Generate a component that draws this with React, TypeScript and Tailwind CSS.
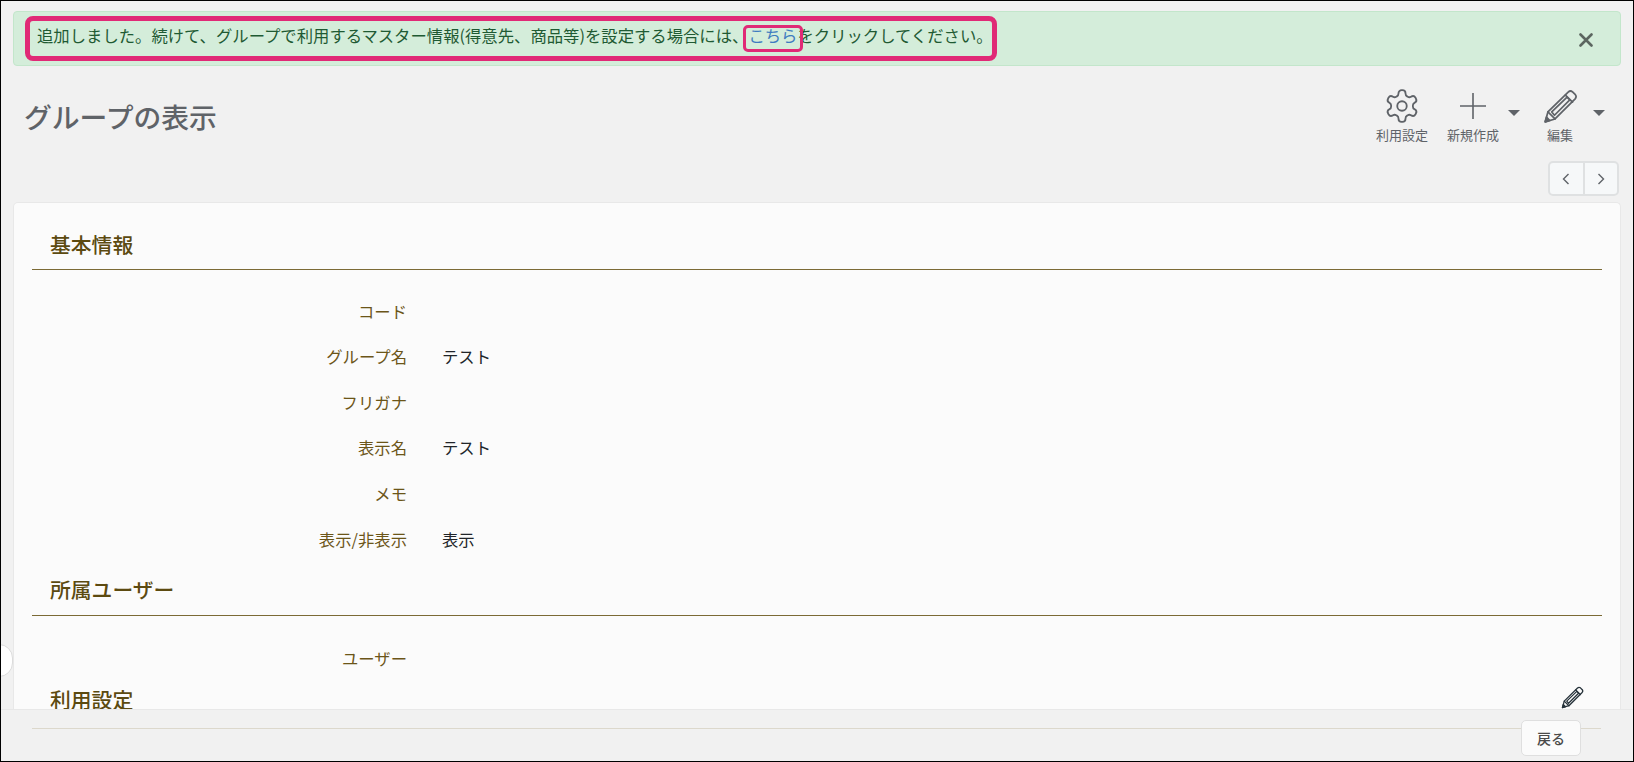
import React from "react";

const FONT = '"Noto Sans CJK JP", "Noto Sans", sans-serif';

function Pencil({ size, stroke = "#5f6368", sw = 1.6 }: { size: number; stroke?: string; sw?: number }) {
  return (
    <svg width={size} height={size} viewBox="0 0 32 32" fill="none" stroke={stroke} strokeWidth={sw} strokeLinejoin="round" strokeLinecap="round">
      <path d="M2 30 L4.5 21 L23 2.8 Q25 1 27 2.6 L29.6 5.2 Q31 7 29.4 9 L11 27.4 Z" />
      <path d="M4.5 21 L11 27.4" />
      <path d="M20.5 5.5 L27 12" />
      <path d="M8 21 L22 7.5 L24.5 10 L10.5 24 Z" />
      <path d="M2 30 L3.2 25.8 L6.2 28.8 Z" fill={stroke} />
    </svg>
  );
}

function Gear() {
  return (
    <svg width="38" height="38" viewBox="0 0 24 24" fill="none" stroke="#5f6368" strokeWidth="1.15" strokeLinecap="round" strokeLinejoin="round">
      <path d="M12.22 2h-.44a2 2 0 0 0-2 2v.18a2 2 0 0 1-1 1.73l-.43.25a2 2 0 0 1-2 0l-.15-.08a2 2 0 0 0-2.73.73l-.22.38a2 2 0 0 0 .73 2.73l.15.1a2 2 0 0 1 1 1.72v.51a2 2 0 0 1-1 1.74l-.15.09a2 2 0 0 0-.73 2.73l.22.38a2 2 0 0 0 2.73.73l.15-.08a2 2 0 0 1 2 0l.43.25a2 2 0 0 1 1 1.73V20a2 2 0 0 0 2 2h.44a2 2 0 0 0 2-2v-.18a2 2 0 0 1 1-1.73l.43-.25a2 2 0 0 1 2 0l.15.08a2 2 0 0 0 2.73-.73l.22-.39a2 2 0 0 0-.73-2.73l-.15-.08a2 2 0 0 1-1-1.74v-.5a2 2 0 0 1 1-1.74l.15-.09a2 2 0 0 0 .73-2.73l-.22-.38a2 2 0 0 0-2.73-.73l-.15.08a2 2 0 0 1-2 0l-.43-.25a2 2 0 0 1-1-1.73V4a2 2 0 0 0-2-2z" />
      <circle cx="12" cy="12" r="3" />
    </svg>
  );
}

function Caret() {
  return <div className="h-0 w-0 border-x-[6px] border-t-[6px] border-x-transparent border-t-[#5f6368]" />;
}

function Row({ label, value }: { label: string; value?: string }) {
  return (
    <div className="flex h-[45.6px] items-center text-[16.35px]">
      <div className="w-[393px] text-right text-[#6b5518]">{label}</div>
      <div className="ml-[35px] text-[#212529]">{value}</div>
    </div>
  );
}

function Section({ title }: { title: string }) {
  return (
    <div className="mx-[18px] flex h-[47px] items-center border-b border-[#7b6a35] pb-[3px] pl-[18px] text-[20.8px] font-medium text-[#5c4a10]">
      {title}
    </div>
  );
}

export default function App() {
  return (
    <div className="relative flex h-[762px] w-[1634px] flex-col overflow-hidden border border-black bg-[#f1f1f1]" style={{ fontFamily: FONT }}>
      {/* alert */}
      <div className="relative mx-[12px] mt-[10px] flex h-[55px] shrink-0 items-center justify-between rounded border border-[#c3e6cb] bg-[#d4edda] pl-[23px] pr-[27px] text-[16.35px] text-[#1f5a33]">
        <div className="-mt-[6px] whitespace-nowrap">
          追加しました。続けて、グループで利用するマスター情報(得意先、商品等)を設定する場合には、
          <span className="text-[#3f7cc0]">こちら</span>
          をクリックしてください。
        </div>
        <svg width="14" height="14" viewBox="0 0 14 14" className="mt-[2px]" stroke="#5c6660" strokeWidth="2.6" strokeLinecap="round">
          <path d="M1.5 1.5 L12.5 12.5 M12.5 1.5 L1.5 12.5" />
        </svg>
        <div className="absolute left-[11px] top-[4px] h-[45px] w-[972px] rounded-[8px] border-[5px] border-[#e02a76]" />
        <div className="absolute left-[729px] top-[13px] h-[27px] w-[60px] rounded-[5px] border-[3px] border-[#e02a76]" />
      </div>

      {/* header */}
      <div className="flex h-[95px] shrink-0 items-start justify-between pl-[23px] pr-[28px]">
        <h1 className="mt-[30px] text-[27.8px] font-medium leading-[40px] text-[#5f6368]">グループの表示</h1>
        <div className="mt-[21px] flex items-start text-[13px] text-[#5f6368]">
          <div className="flex w-[68px] flex-col items-center">
            <div className="flex h-[38px] items-center"><Gear /></div>
            <div className="leading-[20px]">利用設定</div>
          </div>
          <div className="ml-[3px] flex w-[68px] flex-col items-center">
            <div className="flex h-[38px] items-center">
              <svg width="28" height="28" viewBox="0 0 28 28" stroke="#5f6368" strokeWidth="1.6"><path d="M14 1 V27 M1 14 H27" /></svg>
            </div>
            <div className="leading-[20px]">新規作成</div>
          </div>
          <div className="ml-[1px] mt-[23px]"><Caret /></div>
          <div className="ml-[14px] flex w-[52px] flex-col items-center">
            <div className="flex h-[38px] items-center"><Pencil size={35} /></div>
            <div className="leading-[20px]">編集</div>
          </div>
          <div className="ml-[7px] mt-[23px]"><Caret /></div>
        </div>
      </div>

      {/* pager */}
      <div className="flex h-[35px] shrink-0 justify-end pr-[14px]">
        <div className="flex h-[35px] w-[71px] rounded-[5px] border-2 border-[#dfe1e2] bg-[#f6f8f9]">
          <div className="flex flex-1 items-center justify-center border-r-2 border-[#dfe1e2]">
            <svg width="8" height="12" viewBox="0 0 8 12" fill="none" stroke="#5f6368" strokeWidth="1.4"><path d="M6.5 1 L1.5 6 L6.5 11" /></svg>
          </div>
          <div className="flex flex-1 items-center justify-center">
            <svg width="8" height="12" viewBox="0 0 8 12" fill="none" stroke="#5f6368" strokeWidth="1.4"><path d="M1.5 1 L6.5 6 L1.5 11" /></svg>
          </div>
        </div>
      </div>

      {/* card */}
      <div className="relative mx-[12px] mt-[6px] min-h-0 flex-1 overflow-hidden rounded-t-[5px] border border-b-0 border-[#e8e8e8] bg-[#fbfbfb] pt-[20px]">
        <Section title="基本情報" />
        <div className="pt-[18px]">
          <Row label="コード" />
          <Row label="グループ名" value="テスト" />
          <Row label="フリガナ" />
          <Row label="表示名" value="テスト" />
          <Row label="メモ" />
          <Row label="表示/非表示" value="表示" />
        </div>
        <div className="mt-[7px]"><Section title="所属ユーザー" /></div>
        <div className="pt-[20px]"><Row label="ユーザー" /></div>
        <div className="mx-[18px] mt-[3px] flex items-center justify-between pl-[18px] pr-[18px] text-[20.8px] font-medium leading-[30px] text-[#5c4a10]">
          <span>利用設定</span>
          <span className="-mt-[4px]"><Pencil size={23} stroke="#26323a" sw={1.8} /></span>
        </div>
      </div>

      {/* footer */}
      <div className="relative h-[52px] shrink-0 border-t border-[#e8e8e8] bg-[#f1f1f1]">
        <div className="absolute left-[31px] right-[32px] top-[18px] border-t border-[#dcd8cc]" />
        <button className="absolute right-[52px] top-[10px] flex h-[36px] w-[60px] items-center justify-center rounded-[5px] border border-[#dfdfdf] bg-[#fbfbfb] text-[14px] font-medium text-[#4a4a4a]">
          戻る
        </button>
      </div>

      {/* side toggle */}
      <div className="absolute -left-[16px] top-[643px] h-[33px] w-[28px] rounded-full border border-[#dcdcdc] bg-white" />
    </div>
  );
}
